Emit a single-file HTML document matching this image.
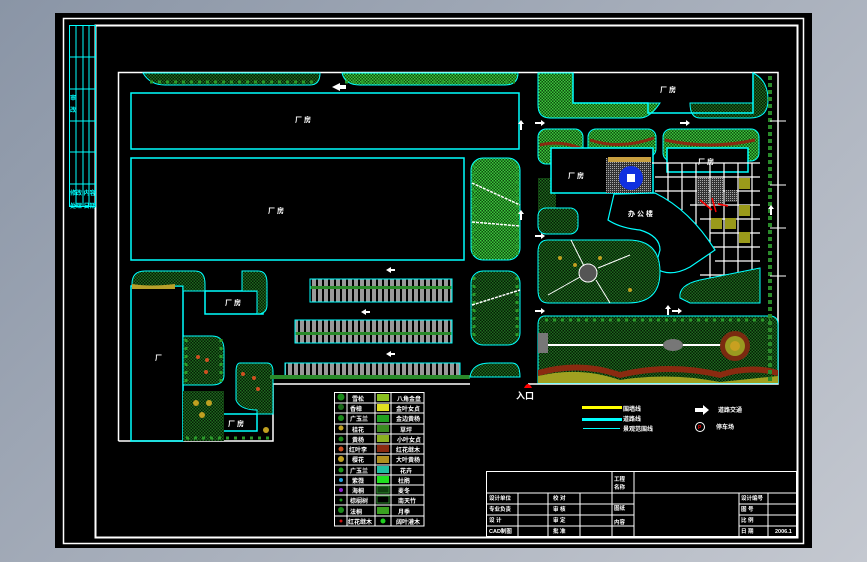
<!DOCTYPE html>
<html><head><meta charset="utf-8"><style>
html,body{margin:0;padding:0;width:867px;height:562px;overflow:hidden;background:linear-gradient(135deg,#8a95a6,#c4c8d0);}
svg{position:absolute;left:0;top:0}
text{font-family:"Liberation Sans","Noto Sans CJK SC",sans-serif;fill:#fff;font-weight:bold}
</style></head><body>
<svg width="867" height="562" viewBox="0 0 867 562">
<defs>
<pattern id="chk" width="3" height="3" patternUnits="userSpaceOnUse"><rect width="3" height="3" fill="#041c04"/><rect width="1.5" height="1.5" fill="#1f6a1f"/><rect x="1.5" y="1.5" width="1.5" height="1.5" fill="#1f6a1f"/></pattern>
<pattern id="chkl" width="3" height="3" patternUnits="userSpaceOnUse"><rect width="3" height="3" fill="#0f4a0f"/><rect width="1.5" height="1.5" fill="#3cc83c"/><rect x="1.5" y="1.5" width="1.5" height="1.5" fill="#3cc83c"/></pattern>
<pattern id="gry" width="2" height="2" patternUnits="userSpaceOnUse"><rect width="2" height="2" fill="#333"/><rect width="1" height="1" fill="#aaa"/></pattern>
<pattern id="park" width="6" height="23" patternUnits="userSpaceOnUse"><rect width="6" height="23" fill="#999"/><rect x="4" width="2" height="23" fill="#000"/><rect y="10" width="6" height="3" fill="#2a8a2a"/></pattern>
</defs>
<rect x="55" y="13" width="757" height="535" fill="#000"/>
<rect x="63.5" y="18.5" width="740" height="525" fill="none" stroke="#fff" stroke-width="1.5"/>
<rect x="95.5" y="25.5" width="702" height="512" fill="none" stroke="#fff" stroke-width="2"/>
<g stroke="#0ff" stroke-width="1" fill="none">
<rect x="69.5" y="25.5" width="26" height="181"/>
<line x1="76" y1="25" x2="76" y2="206"/><line x1="83" y1="25" x2="83" y2="206"/><line x1="89" y1="25" x2="89" y2="206"/>
<line x1="69" y1="57" x2="95" y2="57"/><line x1="69" y1="89" x2="95" y2="89"/><line x1="69" y1="121" x2="95" y2="121"/><line x1="69" y1="152" x2="95" y2="152"/><line x1="69" y1="184" x2="95" y2="184"/>
</g>
<g font-size="6"><text x="70" y="100" style="fill:#0ff">审</text><text x="70" y="112" style="fill:#0ff">改</text><text x="70" y="195" style="fill:#0ff">修改 内容</text><text x="70" y="208" style="fill:#0ff">处理 日期</text></g>
<path d="M118.5 441 V72.5 H778 V384 H528 M118.5 441 H273 V384 H470" fill="none" stroke="#fff" stroke-width="1.5"/>
<path d="M143 73 Q150 85 165 85 H310 Q320 85 320 73 Z" fill="url(#chk)" stroke="#0ff"/>
<path d="M342 73 Q345 85 360 85 H505 Q518 85 518 73 Z" fill="url(#chkl)" stroke="#0ff"/>
<path d="M150 82 H318 M345 82 H515" stroke="#2a9a2a" stroke-width="3" stroke-dasharray="3 5"/>
<path d="M332 87 l8 -4 v2 h6 v4 h-6 v2z" fill="#fff"/>
<g fill="none" stroke="#0ff" stroke-width="1.5">
<rect x="131" y="93" width="388" height="56"/>
<rect x="131" y="158" width="333" height="102"/>
<rect x="131" y="286" width="52" height="155"/>
<rect x="205" y="291" width="58" height="23"/>
<rect x="215" y="414" width="42" height="17"/>
</g>
<g font-size="7"><text x="295" y="122">厂 房</text><text x="268" y="213">厂 房</text><text x="155" y="360">厂</text><text x="225" y="305">厂 房</text><text x="228" y="426">厂 房</text></g>
<path d="M132 284 Q132 271 145 271 H195 Q205 271 205 284 V291 H183 V286 H132Z" fill="url(#chk)" stroke="#0ff"/>
<path d="M132 284 Q150 287 175 284 V289 H132Z" fill="#b8a02a"/>
<path d="M242 271 H258 Q267 271 267 283 V305 Q267 314 257 314 V291 H242Z" fill="url(#chk)" stroke="#0ff"/>
<path d="M183 336 H212 Q224 336 224 350 V375 Q224 385 212 385 H183Z" fill="url(#chk)" stroke="#0ff"/>
<path d="M183 391 H224 V441 H183Z" fill="url(#chk)"/>
<path d="M240 363 H267 Q273 363 273 372 V414 H257 V410 Q240 410 236 400 V372 Q236 363 240 363Z" fill="url(#chk)" stroke="#0ff"/>
<path d="M186 339 V382 M186 438 H270 M221 339 V382" stroke="#2a9a2a" stroke-width="3" stroke-dasharray="3 5"/>
<g fill="#d05020"><circle cx="198" cy="357" r="2"/><circle cx="207" cy="360" r="2"/><circle cx="206" cy="372" r="2"/><circle cx="254" cy="378" r="2"/><circle cx="258" cy="389" r="2"/><circle cx="243" cy="374" r="2"/></g>
<g fill="#c0a020"><circle cx="196" cy="403" r="3"/><circle cx="209" cy="403" r="3"/><circle cx="202" cy="415" r="3"/><circle cx="266" cy="430" r="3"/></g>
<rect x="310" y="279" width="142" height="23" fill="url(#park)" stroke="#0ff"/>
<rect x="295" y="320" width="157" height="23" fill="url(#park)" stroke="#0ff"/>
<rect x="285" y="363" width="175" height="14" fill="url(#park)" stroke="#0ff"/>
<path d="M270 377 H470" stroke="#2a8a2a" stroke-width="4"/>
<path d="M470 377 Q472 363 490 363 H512 Q520 363 520 377Z" fill="url(#chk)" stroke="#0ff"/>
<g fill="#fff"><path d="M386 270 l5 -3 v2 h4 v2 h-4 v2z"/><path d="M361 312 l5 -3 v2 h4 v2 h-4 v2z"/><path d="M386 354 l5 -3 v2 h4 v2 h-4 v2z"/></g>
<rect x="471" y="158" width="49" height="102" rx="12" fill="url(#chkl)" stroke="#0ff"/>
<rect x="471" y="271" width="49" height="74" rx="12" fill="url(#chk)" stroke="#0ff"/>
<path d="M474 165 V255 M517 165 V255 M474 277 V340 M517 277 V340" stroke="#2a9a2a" stroke-width="3" stroke-dasharray="3 5"/>
<path d="M472 183 L520 205 M472 222 L520 226 M472 305 L520 290" stroke="#fff" stroke-width="1.5" stroke-dasharray="3 1"/>
<path d="M538 73 H573 V103 H660 Q650 118 640 118 H550 Q538 118 538 105Z" fill="url(#chkl)" stroke="#0ff"/>
<path d="M690 103 H753 V73 Q768 80 768 100 Q768 118 750 118 H700 Q690 118 690 103Z" fill="url(#chk)" stroke="#0ff"/>
<path d="M573 72.5 V103 H648 V113 H753 V72.5" fill="none" stroke="#0ff" stroke-width="1.5"/>
<text x="660" y="92" font-size="7">厂 房</text>
<rect x="538" y="129" width="45" height="35" rx="8" fill="url(#chkl)" stroke="#0ff"/>
<rect x="588" y="129" width="68" height="28" rx="8" fill="url(#chkl)" stroke="#0ff"/>
<rect x="663" y="129" width="96" height="32" rx="8" fill="url(#chkl)" stroke="#0ff"/>
<path d="M540 145 Q560 140 580 148 M590 140 Q620 150 654 138 M665 140 Q710 150 755 140" stroke="#8a2a10" stroke-width="3" fill="none"/>
<rect x="538" y="178" width="18" height="50" fill="url(#chk)"/>
<rect x="538" y="208" width="40" height="26" rx="8" fill="url(#chk)" stroke="#0ff"/>
<rect x="551" y="148" width="102" height="45" fill="#000" stroke="#0ff" stroke-width="1.5"/>
<rect x="667" y="148" width="81" height="24" fill="#000" stroke="#0ff" stroke-width="1.5"/>
<text x="568" y="178" font-size="7">厂 房</text><text x="698" y="164" font-size="7">厂 房</text>
<rect x="606" y="158" width="45" height="35" fill="url(#gry)"/>
<rect x="608" y="157" width="43" height="5" fill="#c8a040"/>
<circle cx="631" cy="178" r="12" fill="#1030e0"/><rect x="627" y="174" width="8" height="8" fill="#fff"/>
<g fill="none" stroke="#fff" stroke-width="1.2">
<path d="M652 163 H760 M655 177 H760 M655 191 H760 M690 205 H760 M700 219 H760 M710 233 H760 M710 247 H760 M715 261 H760 M700 275 H760 M690 290 H760"/>
<path d="M668 163 V210 M682 163 V210 M696 163 V225 M710 163 V300 M724 163 V300 M738 163 V300 M752 163 V300"/>
</g>
<g fill="url(#gry)"><rect x="697" y="178" width="12" height="26"/><rect x="711" y="178" width="12" height="26"/><rect x="725" y="190" width="12" height="12"/></g>
<g fill="#9a9a1a"><rect x="739" y="178" width="11" height="11"/><rect x="739" y="205" width="11" height="11"/><rect x="739" y="232" width="11" height="11"/><rect x="725" y="218" width="11" height="11"/><rect x="711" y="218" width="11" height="11"/></g>
<path d="M700 200 L712 210 M712 198 L716 212 M718 204 L728 206" stroke="#f00" stroke-width="1.5"/>
<path d="M614 194 L608 220 Q620 228 640 230 Q660 236 660 250 L655 268 Q670 278 690 267 L715 250 Q690 210 655 193Z" fill="#000" stroke="#0ff" stroke-width="1.2"/>
<text x="628" y="216" font-size="7">办 公 楼</text>
<path d="M548 240 H628 Q660 240 660 272 Q660 303 628 303 H548 Q538 303 538 290 V252 Q538 240 548 240Z" fill="url(#chk)" stroke="#0ff"/>
<circle cx="588" cy="273" r="9" fill="#555" stroke="#fff"/>
<path d="M571 240 L584 266 M548 295 L580 277 M598 268 L630 255 M596 280 L610 303" stroke="#fff" stroke-width="1"/>
<g fill="#c0a020"><circle cx="560" cy="258" r="2"/><circle cx="575" cy="265" r="2"/><circle cx="600" cy="258" r="2"/><circle cx="630" cy="290" r="2"/></g>
<path d="M680 298 Q678 285 700 280 L760 268 V303 H690Z" fill="url(#chk)" stroke="#0ff"/>
<path d="M545 316 H770 Q778 316 778 325 V383 H538 V325 Q538 316 545 316Z" fill="url(#chk)" stroke="#0ff"/>
<path d="M545 320 H770" stroke="#2a9a2a" stroke-width="3" stroke-dasharray="3 5"/>
<path d="M538 370 Q580 358 620 372 Q670 360 720 372 Q750 362 778 370 V376 Q750 368 720 378 Q670 366 620 378 Q580 364 538 376Z" fill="#8a2a10"/>
<path d="M538 376 Q580 366 620 380 Q670 372 720 382 L778 376 V383 H538Z" fill="#a0a020"/>
<path d="M538 345 H740" stroke="#fff" stroke-width="2"/>
<ellipse cx="673" cy="345" rx="10" ry="6" fill="#777"/>
<circle cx="735" cy="346" r="15" fill="#7a2a10"/><circle cx="735" cy="346" r="10" fill="#9a9a20"/><circle cx="735" cy="346" r="5" fill="#c8a020"/>
<rect x="538" y="333" width="10" height="20" fill="#777"/>
<path d="M770 76 V384" stroke="#2a8a2a" stroke-width="4" stroke-dasharray="4 3"/>
<path d="M770 121 H786 M770 185 H786 M770 228 H786 M770 276 H786" stroke="#fff"/>
<g fill="#fff"><path d="M520 130 v-6 l-2 0 l3 -4 l3 4 h-2 v6z"/><path d="M520 220 v-6 l-2 0 l3 -4 l3 4 h-2 v6z"/><path d="M667 315 v-6 l-2 0 l3 -4 l3 4 h-2 v6z"/><path d="M770 215 v-6 l-2 0 l3 -4 l3 4 h-2 v6z"/>
<path d="M535 122 h6 v-2 l4 3 l-4 3 v-2 h-6z"/><path d="M680 122 h6 v-2 l4 3 l-4 3 v-2 h-6z"/><path d="M535 235 h6 v-2 l4 3 l-4 3 v-2 h-6z"/><path d="M535 310 h6 v-2 l4 3 l-4 3 v-2 h-6z"/><path d="M672 310 h6 v-2 l4 3 l-4 3 v-2 h-6z"/></g>
<path d="M524 388 Q528 380 532 388Z" fill="#f00"/>
<text x="516" y="399" font-size="9" font-weight="normal">入口</text>
<g stroke="#fff" stroke-width="1" fill="none">
<rect x="334.5" y="392.5" width="89.5" height="133.5"/>
<path d="M347 392 V526 M375 392 V526 M391 392 V526"/>
<path d="M334 403 H424 M334 413 H424 M334 424 H424 M334 434 H424 M334 444 H424 M334 454 H424 M334 465 H424 M334 475 H424 M334 485 H424 M334 495 H424 M334 505 H424 M334 516 H424"/>
</g>
<g font-size="6">
<text x="352" y="401">雪松</text><text x="350" y="411">香樟</text><text x="350" y="421">广玉兰</text><text x="352" y="432">桂花</text><text x="352" y="442">黄杨</text><text x="349" y="452">红叶李</text><text x="352" y="462">樱花</text><text x="350" y="473">广玉兰</text><text x="352" y="483">紫薇</text><text x="352" y="493">海桐</text><text x="350" y="503">棕榈树</text><text x="350" y="514">法桐</text><text x="348" y="524">红花继木</text>
<text x="397" y="401">八角金盘</text><text x="396" y="411">金叶女贞</text><text x="396" y="421">金边黄杨</text><text x="400" y="432">草坪</text><text x="397" y="442">小叶女贞</text><text x="396" y="452">红花继木</text><text x="396" y="462">大叶黄杨</text><text x="400" y="473">花卉</text><text x="398" y="483">杜鹃</text><text x="398" y="493">麦冬</text><text x="398" y="503">南天竹</text><text x="398" y="514">月季</text><text x="396" y="524">阔叶灌木</text>
</g>
<g><circle cx="341" cy="397" r="3.5" fill="#1a8a1a"/><circle cx="341" cy="407" r="3" fill="#1a6a1a"/><circle cx="341" cy="418" r="3" fill="#1a8a1a"/><circle cx="341" cy="428" r="2.5" fill="#c0a020"/><circle cx="341" cy="439" r="2.5" fill="#1a8a1a"/><circle cx="341" cy="449" r="2.5" fill="#d05020"/><circle cx="341" cy="459" r="3" fill="#c0a020"/><circle cx="341" cy="470" r="2.5" fill="#1a9a1a"/><circle cx="341" cy="480" r="2" fill="#20a0e0"/><circle cx="341" cy="490" r="2" fill="#9020d0"/><circle cx="341" cy="500" r="1.5" fill="#1a9a1a"/><circle cx="341" cy="510" r="3" fill="#1a8a1a"/><circle cx="341" cy="521" r="1.5" fill="#d01010"/>
<rect x="377" y="394" width="12" height="7" fill="#8ac020"/><rect x="377" y="404" width="12" height="7" fill="#e0e020"/><rect x="377" y="415" width="12" height="7" fill="#20a020"/><rect x="377" y="425" width="12" height="7" fill="#3a8a20"/><rect x="377" y="435" width="12" height="7" fill="#8ab020"/><rect x="377" y="445" width="12" height="7" fill="#8a2a10"/><rect x="377" y="456" width="12" height="7" fill="#b09020"/><rect x="377" y="466" width="12" height="7" fill="#20c0a0"/><rect x="377" y="476" width="12" height="7" fill="#20e020"/><rect x="377" y="486" width="12" height="7" fill="#104010" stroke="#2a8a2a"/><rect x="377" y="496" width="12" height="7" fill="#000" stroke="#2a8a2a"/><rect x="377" y="507" width="12" height="7" fill="#3aa020"/><circle cx="383" cy="521" r="2.5" fill="#20d020"/></g>
<rect x="582" y="406" width="40" height="3" fill="#ff0"/><text x="623" y="411" font-size="6">围墙线</text>
<rect x="582" y="418" width="40" height="3" fill="#0ff"/><text x="623" y="421" font-size="6">道路线</text>
<rect x="583" y="428" width="37" height="1" fill="#0ff"/><text x="623" y="431" font-size="6">景观范围线</text>
<path d="M695 408 h8 v-3 l6 5 l-6 5 v-3 h-8z" fill="#fff"/><text x="718" y="412" font-size="6">道路交通</text>
<circle cx="700" cy="427" r="4.5" fill="none" stroke="#fff"/><text x="698" y="429" font-size="5" style="fill:#f00">P</text><text x="716" y="429" font-size="6">停车场</text>
<g stroke="#fff" stroke-width="1" fill="none">
<rect x="486.5" y="471.5" width="310" height="65"/>
<path d="M486 493 H797 M486 504 H634 M486 515 H634 M486 526 H634 M739 504 H797 M739 515 H797 M739 526 H797"/>
<path d="M612 471 V537 M634 471 V537 M518 493 V537 M548 493 V537 M580 493 V537 M739 493 V537 M768 493 V537"/>
</g>
<g font-size="5.5"><text x="614" y="481">工程</text><text x="614" y="489">名称</text><text x="614" y="510">图纸</text><text x="614" y="524">内容</text>
<text x="489" y="500">设计单位</text><text x="489" y="511">专业负责</text><text x="489" y="522">设 计</text><text x="489" y="533">CAD制图</text>
<text x="553" y="500">校 对</text><text x="553" y="511">审 核</text><text x="553" y="522">审 定</text><text x="553" y="533">批 准</text>
<text x="741" y="500">设计编号</text><text x="741" y="511">图 号</text><text x="741" y="522">比 例</text><text x="741" y="533">日 期</text><text x="775" y="533">2006.1</text></g>
</svg>
</body></html>
